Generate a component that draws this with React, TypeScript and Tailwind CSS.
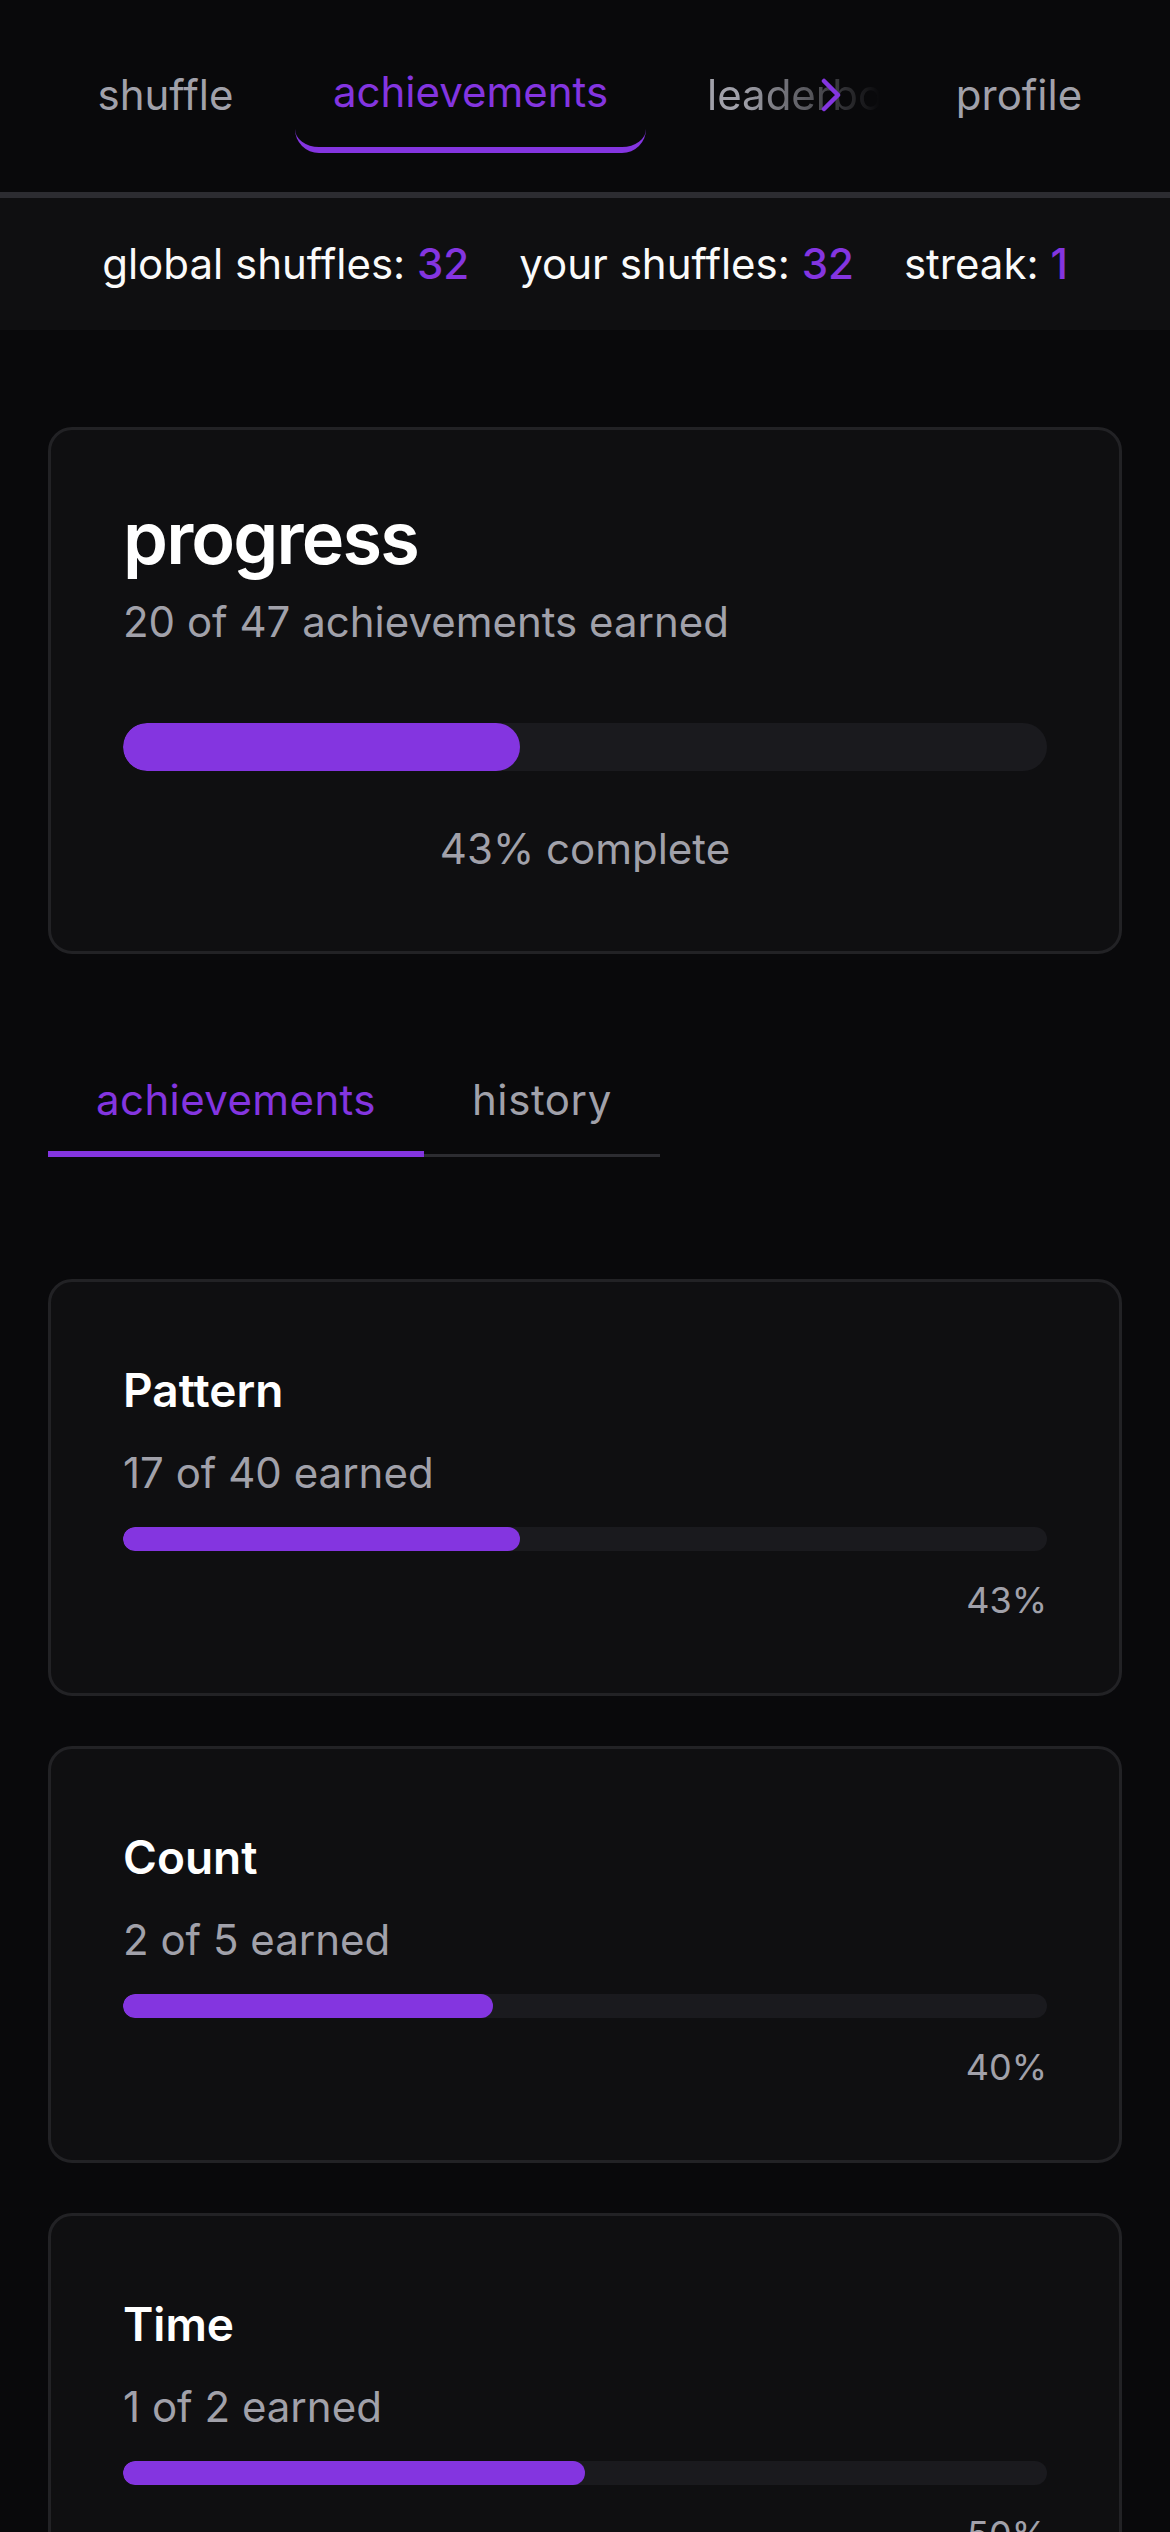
import React from "react";

const PURPLE = "text-[#8435e0]";

function NavItem({ label, active, width }: { label: string; active?: boolean; width: string }) {
  return (
    <button
      className={`${width} shrink-0 rounded-[24px] pt-[24px] pb-[22px] text-center text-[42px] leading-[60px] border-b-[6px] ${
        active ? "border-[#8435e0] text-[#8435e0]" : "border-transparent text-[#a1a1aa]"
      }`}
    >
      <span className={active ? "relative -top-[3px]" : ""}>{label}</span>
    </button>
  );
}

function CategoryCard({ title, earned, total }: { title: string; earned: number; total: number }) {
  const pct = Math.round((earned / total) * 100);
  return (
    <div className="rounded-[24px] border-[3px] border-[#222225] bg-[#0f0f11] px-[72px] pt-[72px] pb-[69px]">
      <h3 className="text-[46px] leading-[72px] font-semibold text-white">{title}</h3>
      <p className="mt-[17px] text-[42px] leading-[60px] text-[#a1a1aa]">
        {earned} of {total} earned
      </p>
      <div className="mt-[24px] h-[24px] rounded-full bg-[#1a1a1e] overflow-hidden">
        <div className="h-full rounded-full bg-[#8435e0]" style={{ width: `${pct}%` }} />
      </div>
      <p className="mt-[25px] text-right text-[36px] leading-[48px] text-[#a1a1aa]">{pct}%</p>
    </div>
  );
}

export default function App() {
  return (
    <div className="min-h-screen bg-[#09090b] text-white font-['Inter','Noto_Sans',sans-serif]">
      {/* top nav */}
      <nav className="flex h-[198px] items-start gap-[25px] border-b-[6px] border-[#2c2c31] pt-[41px] pl-[61px] overflow-hidden">
        <NavItem label="shuffle" width="w-[209px]" />
        <NavItem label="achievements" width="w-[351px]" active />
        <button className="relative w-[225px] shrink-0 rounded-[24px] pt-[24px] pb-[22px] pl-[36px] text-left text-[42px] leading-[60px] text-[#a1a1aa] border-b-[6px] border-transparent">
          <span className="block w-[173px] overflow-hidden whitespace-nowrap [mask-image:linear-gradient(to_right,black_20%,transparent_100%)] [-webkit-mask-image:linear-gradient(to_right,black_20%,transparent_100%)]">
            leaderboard
          </span>
          <svg
            className="absolute left-[149px] top-[37px]"
            width="22"
            height="34"
            viewBox="0 0 22 34"
            fill="none"
          >
            <polyline
              points="4,3 18,17 4,31"
              stroke="#8435e0"
              strokeWidth="4.5"
              strokeLinecap="round"
              strokeLinejoin="round"
            />
          </svg>
        </button>
        <NavItem label="profile" width="w-[196px]" />
      </nav>

      {/* stats bar */}
      <div className="flex h-[132px] items-center justify-center gap-[50px] bg-[#0f0f11] text-[42px] leading-[60px] text-[#fafafa]">
        <span>
          global shuffles: <span className={`${PURPLE} font-medium`}>32</span>
        </span>
        <span>
          your shuffles: <span className={`${PURPLE} font-medium`}>32</span>
        </span>
        <span>
          streak: <span className={`${PURPLE} font-medium`}>1</span>
        </span>
      </div>

      <main className="px-[48px] pt-[97px] pb-[80px]">
        {/* progress card */}
        <div className="rounded-[24px] border-[3px] border-[#222225] bg-[#0f0f11] p-[72px]">
          <h2 className="text-[72px] leading-none font-semibold tracking-tight text-white">progress</h2>
          <p className="mt-[18px] text-[42px] leading-[60px] text-[#a1a1aa]">20 of 47 achievements earned</p>
          <div className="mt-[71px] h-[48px] rounded-full bg-[#1a1a1e] overflow-hidden">
            <div className="h-full w-[43%] rounded-full bg-[#8435e0]" />
          </div>
          <p className="mt-[48px] text-center text-[42px] leading-[60px] text-[#a1a1aa]">43% complete</p>
        </div>

        {/* tabs */}
        <div className="mt-[116px] flex">
          <button className="px-[48px] pb-[21px] text-[42px] leading-[60px] tracking-[0.4px] text-[#8435e0] border-b-[6px] border-[#8435e0]">
            achievements
          </button>
          <button className="px-[48px] pb-[24px] text-[42px] leading-[60px] tracking-[0.6px] text-[#a1a1aa] border-b-[3px] border-[#2c2c31]">
            history
          </button>
        </div>

        {/* categories */}
        <div className="mt-[122px] flex flex-col gap-[50px]">
          <CategoryCard title="Pattern" earned={17} total={40} />
          <CategoryCard title="Count" earned={2} total={5} />
          <CategoryCard title="Time" earned={1} total={2} />
        </div>
      </main>
    </div>
  );
}
